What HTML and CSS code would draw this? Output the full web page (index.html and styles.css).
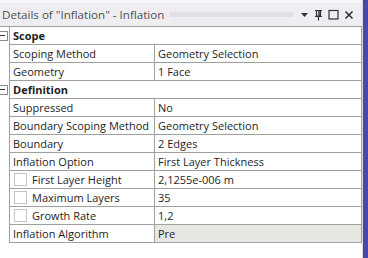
FILE: index.html
```html
<!DOCTYPE html>
<html lang="en">

<head>
    <meta charset="UTF-8" />
    <title>Details of "Inflation"</title>
    <link rel="stylesheet" href="styles.css">
</head>

<body>
    <div class="panel">
        <div class="main">
            <div class="titlebar">
                <span class="title">Details of "Inflation" - Inflation</span>
                <span class="grip"></span>
                <span class="tools">
                    <svg width="9" height="9" viewBox="0 0 9 9"><path d="M1 3h7L4.5 7z" fill="#333" /></svg>
                    <svg width="9" height="12" viewBox="0 0 9 12"><path d="M1 1.5h7M2.5 1.5v5.5h4V1.5M1 7.5h7M4.5 7.5v4" stroke="#333" stroke-width="1.2" fill="none" /><path d="M5 2v5" stroke="#333" stroke-width="1.5" /></svg>
                    <svg width="11" height="11" viewBox="0 0 11 11"><rect x="1" y="1.5" width="9" height="8.5" stroke="#333" stroke-width="1.2" fill="none" /></svg>
                    <svg width="10" height="10" viewBox="0 0 10 10"><path d="M1.5 1.5l7 7M8.5 1.5l-7 7" stroke="#333" stroke-width="1.6" /></svg>
                </span>
            </div>
            <div class="table">
                <div class="row cat"><span class="gut"><span class="tog"></span></span><span class="cell full">Scope</span></div>
                <div class="row"><span class="gut"></span><span class="cell">Scoping Method</span><span class="cell val">Geometry Selection</span></div>
                <div class="row"><span class="gut"></span><span class="cell">Geometry</span><span class="cell val">1 Face</span></div>
                <div class="row cat"><span class="gut"><span class="tog"></span></span><span class="cell full">Definition</span></div>
                <div class="row"><span class="gut"></span><span class="cell">Suppressed</span><span class="cell val">No</span></div>
                <div class="row"><span class="gut"></span><span class="cell">Boundary Scoping Method</span><span class="cell val">Geometry Selection</span></div>
                <div class="row"><span class="gut"></span><span class="cell">Boundary</span><span class="cell val">2 Edges</span></div>
                <div class="row"><span class="gut"></span><span class="cell">Inflation Option</span><span class="cell val">First Layer Thickness</span></div>
                <div class="row"><span class="gut"></span><span class="cell"><span class="box"></span>First Layer Height</span><span class="cell val">2,1255e-006 m</span></div>
                <div class="row"><span class="gut"></span><span class="cell"><span class="box"></span>Maximum Layers</span><span class="cell val">35</span></div>
                <div class="row"><span class="gut"></span><span class="cell"><span class="box"></span>Growth Rate</span><span class="cell val">1,2</span></div>
                <div class="row"><span class="gut"></span><span class="cell">Inflation Algorithm</span><span class="cell val grey">Pre</span></div>
            </div>
        </div>
        <div class="edge"></div>
    </div>
</body>

</html>
```

FILE: styles.css
```css
body {
  margin: 0;
  background-color: #ffffff;
  font-family: "Open Sans", "Noto Sans", sans-serif;
  font-size: 11px;
  color: #1e1e1e;
}

.panel {
  display: flex;
  width: 368px;
  height: 258px;
}

.main {
  width: 362px;
}

.edge {
  width: 6px;
  background-color: #4848a6;
  border-left: 1px solid #d8d8e8;
}

/* title bar */
.titlebar {
  display: flex;
  align-items: center;
  height: 26px;
  background-color: #eeeef2;
  border-top: 3px solid #f6f6f8;
  box-sizing: border-box;
}

.title {
  padding-left: 2px;
  color: #505050;
  font-size: 11.6px;
  white-space: nowrap;
}

.grip {
  flex: 1;
  height: 5px;
  margin: 0 7px 0 6px;
  background-image: radial-gradient(circle, #b4b4bc 0.5px, transparent 0.8px);
  background-size: 2px 2px;
  opacity: 0.8;
}

.tools {
  display: flex;
  align-items: center;
  gap: 5px;
  padding-right: 8px;
}

.tools svg {
  display: block;
}

/* property grid */
.table {
  border-top: 1px solid #a0a0a0;
}

.row {
  display: grid;
  grid-template-columns: 9px 145px 208px;
  height: 18px;
}

.gut {
  display: flex;
  align-items: center;
  background-color: #ffffff;
}

.tog {
  position: relative;
  width: 7px;
  height: 8px;
  border: 1px solid #8a8a8a;
  border-left: none;
  background-color: #ffffff;
}

.tog::after {
  content: "";
  position: absolute;
  left: 0;
  top: 3px;
  width: 5px;
  height: 1px;
  background-color: #333;
}

.cell {
  display: flex;
  align-items: center;
  padding-left: 3px;
  line-height: 17px;
  border-left: 1px solid #a0a0a0;
  border-bottom: 1px solid #a0a0a0;
  white-space: nowrap;
  overflow: hidden;
}

.val {
  border-right: 1px solid #a0a0a0;
}

.full {
  grid-column: span 2;
  border-right: 1px solid #a0a0a0;
  font-weight: bold;
}

.grey {
  background-color: #e6e6e3;
}

.box {
  width: 11px;
  height: 11px;
  margin-right: 5px;
  margin-left: 1px;
  border: 1px solid #c4c4c4;
  background-color: #ffffff;
}
```
